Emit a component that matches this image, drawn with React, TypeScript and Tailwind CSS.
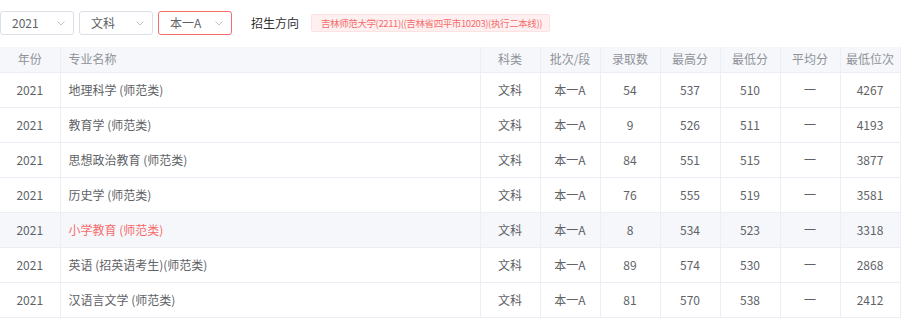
import React from "react";

const rows = [
  ["2021", "地理科学 (师范类)", "文科", "本一A", "54", "537", "510", "一", "4267"],
  ["2021", "教育学 (师范类)", "文科", "本一A", "9", "526", "511", "一", "4193"],
  ["2021", "思想政治教育 (师范类)", "文科", "本一A", "84", "551", "515", "一", "3877"],
  ["2021", "历史学 (师范类)", "文科", "本一A", "76", "555", "519", "一", "3581"],
  ["2021", "小学教育 (师范类)", "文科", "本一A", "8", "534", "523", "一", "3318"],
  ["2021", "英语 (招英语考生)(师范类)", "文科", "本一A", "89", "574", "530", "一", "2868"],
  ["2021", "汉语言文学 (师范类)", "文科", "本一A", "81", "570", "538", "一", "2412"],
];

const headers = ["年份", "专业名称", "科类", "批次/段", "录取数", "最高分", "最低分", "平均分", "最低位次"];
const widths = [60, 420, 60, 60, 60, 60, 60, 60, 60];

function Chevron() {
  return (
    <svg width="10" height="10" viewBox="0 0 10 10" fill="none">
      <path d="M1.5 3.5 L5 7 L8.5 3.5" stroke="#c0c4cc" strokeWidth="1" />
    </svg>
  );
}

function Select({ value, active }: { value: string; active?: boolean }) {
  return (
    <div
      className={`flex h-[24px] w-[74px] items-center justify-between rounded-[3px] border bg-white pl-[11px] pr-[7px] text-[12px] text-[#606266] ${
        active ? "border-[#f56c6c]" : "border-[#dcdfe6]"
      }`}
    >
      <span>{value}</span>
      <Chevron />
    </div>
  );
}

export default function App() {
  return (
    <div
      className="h-[327px] w-[917px] bg-white"
      style={{ fontFamily: '"Noto Sans CJK SC", "Noto Sans", sans-serif' }}
    >
      <div className="flex h-[47px] items-center pb-[1px]">
        <div className="flex items-center gap-[5px]">
          <Select value="2021" />
          <Select value="文科" />
          <Select value="本一A" active />
        </div>
        <div className="ml-[19px] text-[12px] text-[#303133]">招生方向</div>
        <div className="ml-[12px] flex h-[18px] items-center rounded-[2px] border border-[#fde2e2] bg-[#fef0f0] pl-[9px] pr-[7px] text-[9.5px] tracking-[-0.4px] text-[#f56c6c]">
          吉林师范大学(2211)((吉林省四平市10203)(执行二本线))
        </div>
      </div>
      <table className="w-[900px] table-fixed border-collapse text-[12px]">
        <colgroup>
          {widths.map((w, i) => (
            <col key={i} style={{ width: w }} />
          ))}
        </colgroup>
        <thead>
          <tr className="h-[25px] bg-[#f5f7fa]">
            {headers.map((h, i) => (
              <th
                key={i}
                className={`border-b border-r border-[#ebeef5] p-0 font-normal text-[#909399] ${
                  i === 1 ? "pl-[8px] text-left" : "text-center"
                }`}
              >
                {h}
              </th>
            ))}
          </tr>
        </thead>
        <tbody>
          {rows.map((r, ri) => {
            const hl = ri === 4;
            return (
              <tr key={ri} className={`h-[35px] ${hl ? "bg-[#f5f7fa]" : "bg-white"}`}>
                {r.map((c, ci) => (
                  <td
                    key={ci}
                    className={`border-b border-r border-[#ebeef5] p-0 ${
                      ci === 1 ? "pl-[8px] text-left" : "text-center"
                    } ${hl && ci === 1 ? "text-[#f56c6c]" : "text-[#606266]"}`}
                  >
                    {c}
                  </td>
                ))}
              </tr>
            );
          })}
        </tbody>
      </table>
    </div>
  );
}
